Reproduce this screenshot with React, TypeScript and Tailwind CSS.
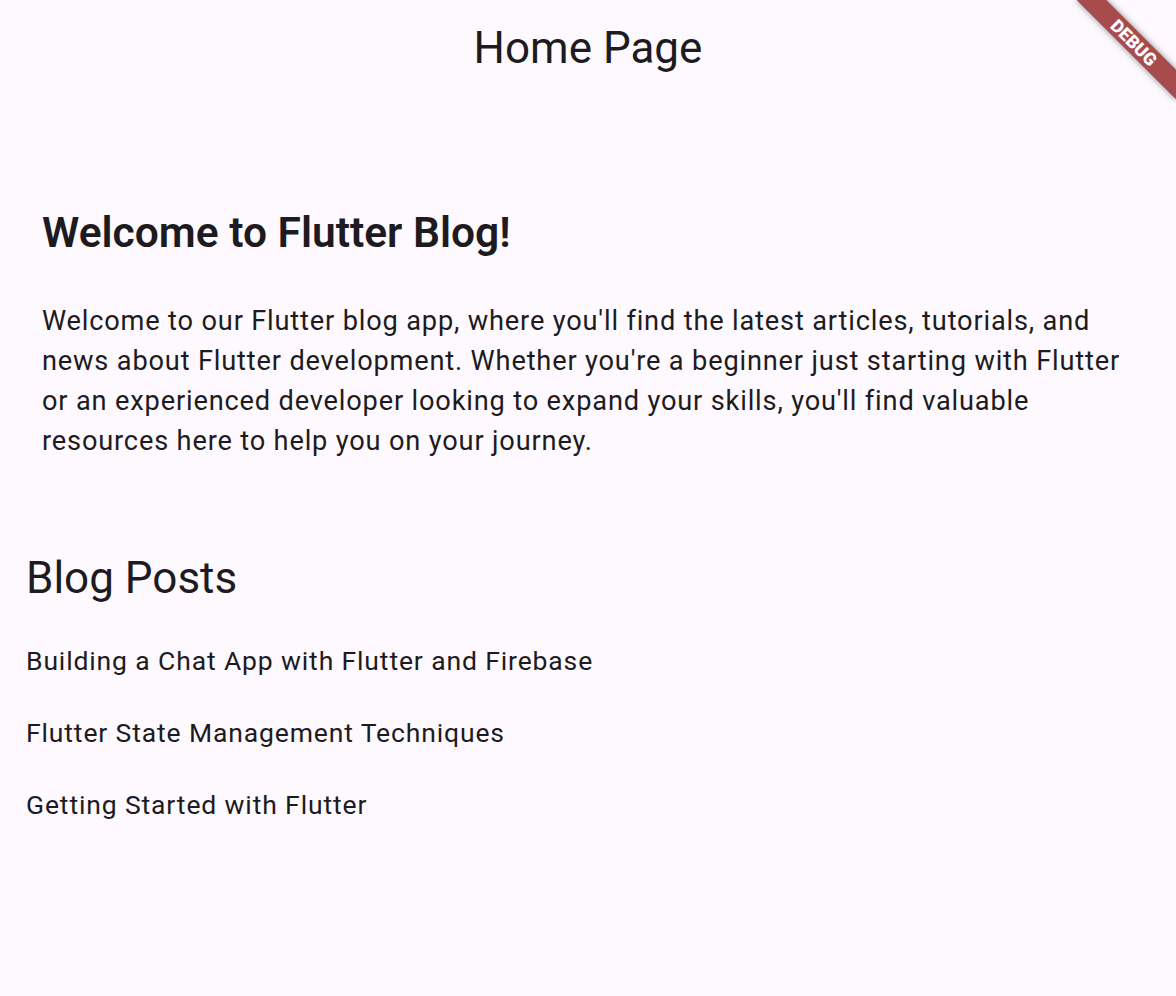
const posts = [
  "Building a Chat App with Flutter and Firebase",
  "Flutter State Management Techniques",
  "Getting Started with Flutter",
];

function DebugBanner() {
  return (
    <div className="pointer-events-none absolute right-0 top-0 h-[160px] w-[160px] overflow-hidden">
      <div className="absolute right-[-28px] top-[31.5px] flex h-[21px] w-[140px] rotate-45 items-center justify-center bg-[#a84b4d] shadow-[0_0_6px_rgba(0,0,0,0.45)]">
        <span className="text-[17.8px] font-black leading-none text-white">DEBUG</span>
      </div>
    </div>
  );
}

export default function App() {
  return (
    <div
      className="relative min-h-[996px] w-full overflow-hidden bg-[#fdf9fe] text-[#1d1b20]"
      style={{ fontFamily: "Roboto, 'Noto Sans', sans-serif" }}
    >
      {/* App bar */}
      <header className="flex h-[96px] items-center justify-center">
        <h1 className="text-[44px] font-normal leading-[52px]">Home Page</h1>
      </header>

      <main className="px-[26px]">
        {/* Intro */}
        <section className="px-4 pt-[112px]">
          <h2 className="text-[42.5px] font-semibold leading-[50px]">Welcome to Flutter Blog!</h2>
          <p className="mt-[43px] text-[27.2px] leading-[40px] tracking-[0.83px]">
            Welcome to our Flutter blog app, where you'll find the latest articles, tutorials, and
            news about Flutter development. Whether you're a beginner just starting with Flutter
            or an experienced developer looking to expand your skills, you'll find valuable
            resources here to help you on your journey.
          </p>
        </section>

        {/* Posts */}
        <section className="mt-[91px]">
          <h2 className="text-[44px] font-normal leading-[52px]">Blog Posts</h2>
          <ul className="mt-[21px]">
            {posts.map((p) => (
              <li key={p} className="py-4 text-[26.5px] leading-[40px] tracking-[0.87px]">
                {p}
              </li>
            ))}
          </ul>
        </section>
      </main>

      <DebugBanner />
    </div>
  );
}
